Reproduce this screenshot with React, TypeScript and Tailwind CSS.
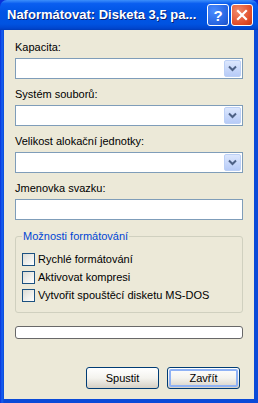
import React from "react";

const font = { fontFamily: '"Liberation Sans", Arial, sans-serif' };

function Combo() {
  return (
    <div className="h-[21px] w-full border border-[#7f9db9] bg-white flex justify-end items-center p-[1px]">
      <div className="h-[17px] w-[17px] rounded-[2px] border border-[#bcd0f6] bg-gradient-to-b from-[#dce7fd] to-[#b7cbf7] flex items-center justify-center">
        <svg width="9" height="7" viewBox="0 0 9 7">
          <path d="M1 1.5 L4.5 5 L8 1.5" stroke="#4d6185" strokeWidth="2" fill="none" />
        </svg>
      </div>
    </div>
  );
}

function Label({ children }: { children: React.ReactNode }) {
  return <div className="h-[13px] leading-[13px] text-[11px] text-black mb-[4px]">{children}</div>;
}

function Check({ label }: { label: string }) {
  return (
    <div className="flex items-center h-[18px] gap-[3px]">
      <div className="w-[13px] h-[13px] border border-[#1c5180] bg-gradient-to-br from-[#dcdcd5] to-white" />
      <span className="text-[11px] leading-[13px] text-black">{label}</span>
    </div>
  );
}

function Button({ label, def }: { label: string; def?: boolean }) {
  return (
    <div className="w-[73px] h-[22px] rounded-[3px] border border-[#003c74] bg-gradient-to-b from-white via-[#f4f3ee] to-[#d6d0c5] flex p-[1px]">
      <div
        className={
          "flex-1 rounded-[2px] flex items-center justify-center text-[11px] text-black " +
          (def ? "border-2 border-[#8fb2f5]" : "")
        }
      >
        {label}
      </div>
    </div>
  );
}

export default function App() {
  return (
    <div className="w-[258px] h-[403px] flex flex-col bg-[#0831d9]" style={font}>
      <div className="h-[30px] rounded-t-[7px] bg-[linear-gradient(to_bottom,#3d8ffb_0%,#0a5ef0_12%,#0055e5_40%,#0053e1_80%,#0046cf_94%,#003bb8_100%)] flex items-center pl-[7px] pr-[5px]">
        <div className="flex-1 text-white font-bold text-[13px] leading-[16px] whitespace-nowrap [text-shadow:1px_1px_0_#0a1e6e]">
          Naformátovat: Disketa 3,5 pa...
        </div>
        <div className="flex gap-[2px]">
          <div className="w-[22px] h-[22px] rounded-[3px] border border-white bg-[radial-gradient(circle_at_30%_30%,#4a8cff,#2663e0_70%,#1d4fc4)] flex items-center justify-center text-white font-bold text-[15px] leading-none">
            ?
          </div>
          <div className="w-[22px] h-[22px] rounded-[3px] border border-white bg-[radial-gradient(circle_at_30%_30%,#f08a6c,#e04a26_70%,#c23715)] flex items-center justify-center">
            <svg width="12" height="12" viewBox="0 0 12 12">
              <path d="M2 2 L10 10 M10 2 L2 10" stroke="white" strokeWidth="2.2" strokeLinecap="square" />
            </svg>
          </div>
        </div>
      </div>
      <div className="flex-1 flex flex-col px-[4px] pb-[4px] bg-[linear-gradient(to_right,#0831d9_0px,#1660f2_2px,#0a4ad8_4px)]">
        <div className="flex-1 bg-[#ece9d8] px-[11px] pt-[11px] flex flex-col">
          <Label>Kapacita:</Label>
          <Combo />
          <div className="h-[9px]" />
          <Label>Systém souborů:</Label>
          <Combo />
          <div className="h-[9px]" />
          <Label>Velikost alokační jednotky:</Label>
          <Combo />
          <div className="h-[9px]" />
          <Label>Jmenovka svazku:</Label>
          <div className="h-[21px] w-full border border-[#7f9db9] bg-white" />
          <div className="mt-[16px] relative border border-[#d0d0bf] rounded-[3px] h-[77px] pt-[13px] px-[6px] flex flex-col">
            <div className="absolute left-[6px] -top-[7px] bg-[#ece9d8] px-[1px] text-[11px] leading-[13px] text-[#0046d5]">
              Možnosti formátování
            </div>
            <Check label="Rychlé formátování" />
            <Check label="Aktivovat kompresi" />
            <Check label="Vytvořit spouštěcí disketu MS-DOS" />
          </div>
          <div className="mt-[13px] h-[13px] w-full rounded-[3px] border border-[#686868] bg-white" />
          <div className="mt-[28px] flex justify-end gap-[8px] pr-[3px]">
            <Button label="Spustit" />
            <Button label="Zavřít" def />
          </div>
        </div>
      </div>
    </div>
  );
}
